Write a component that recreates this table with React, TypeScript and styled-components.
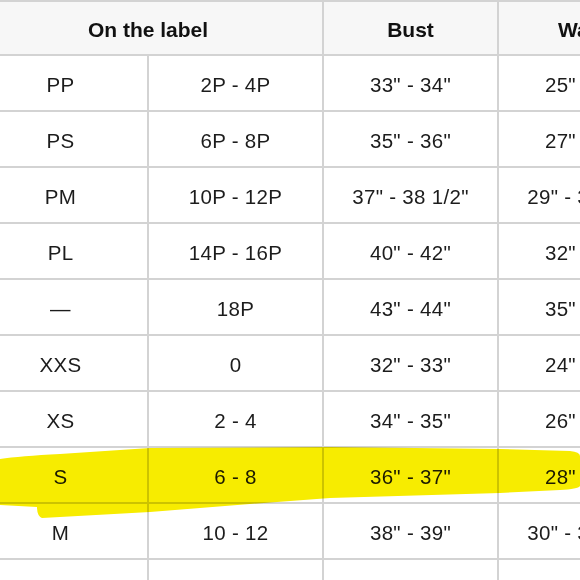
import React from "react";
import styled, { createGlobalStyle } from "styled-components";

type Row = [string, string, string, string];

const rows: Row[] = [
  ["PP", "2P - 4P", '33" - 34"', '25" - 26"'],
  ["PS", "6P - 8P", '35" - 36"', '27" - 28"'],
  ["PM", "10P - 12P", '37" - 38 1/2"', '29" - 30 1/2"'],
  ["PL", "14P - 16P", '40" - 42"', '32" - 34"'],
  ["\u2014", "18P", '43" - 44"', '35" - 36"'],
  ["XXS", "0", '32" - 33"', '24" - 25"'],
  ["XS", "2 - 4", '34" - 35"', '26" - 27"'],
  ["S", "6 - 8", '36" - 37"', '28" - 29"'],
  ["M", "10 - 12", '38" - 39"', '30" - 31 1/2"'],
  ["L", "14 - 16", '40" - 41"', '33" - 35"'],
];

export default function App() {
  return (
    <>
      <GlobalStyle />
      <Page>
        <Table>
          <HeadCell $span={2}>On the label</HeadCell>
          <HeadCell>Bust</HeadCell>
          <HeadCell>Waist</HeadCell>
          {rows.map((r) =>
            r.map((v, i) => <Cell key={r[0] + i}>{v}</Cell>)
          )}
        </Table>
        <Highlight viewBox="0 0 580 580" aria-hidden>
          <path d="M0,459 Q20,456 60,454 L150,448 L330,447 L500,449 L570,451 Q580,452 580,456 L580,486 Q578,489 560,490 L500,493 L330,498 L250,504 L150,512 L42,518 Q37,516 37,507 L0,505 Z" />
        </Highlight>
      </Page>
    </>
  );
}

const GlobalStyle = createGlobalStyle`
  body {
    margin: 0;
    background: #fff;
    overflow: hidden;
  }
`;

const Page = styled.div`
  position: relative;
  width: 580px;
  height: 580px;
  overflow: hidden;
  background: #fff;
  font-family: "Liberation Sans", Arial, sans-serif;
`;

const Table = styled.div`
  display: grid;
  grid-template-columns: repeat(4, 173px);
  grid-template-rows: 52px;
  grid-auto-rows: 54px;
  gap: 2px;
  padding: 2px 0;
  margin-left: -26px;
  width: max-content;
  background: #d3d3d3;
`;

const HeadCell = styled.div<{ $span?: number }>`
  grid-column: span ${({ $span }) => $span ?? 1};
  display: flex;
  align-items: center;
  justify-content: center;
  padding-top: 3px;
  background: #f7f7f7;
  font-size: 21px;
  font-weight: 700;
  color: #111;
  white-space: nowrap;
`;

const Cell = styled.div`
  display: flex;
  align-items: center;
  justify-content: center;
  padding-top: 4px;
  background: #fff;
  font-size: 20.5px;
  letter-spacing: 0.3px;
  color: #1c1c1c;
  white-space: nowrap;
`;

const Highlight = styled.svg`
  position: absolute;
  top: 0;
  left: 0;
  width: 580px;
  height: 580px;
  pointer-events: none;
  mix-blend-mode: multiply;
  fill: #f7ec00;
`;
